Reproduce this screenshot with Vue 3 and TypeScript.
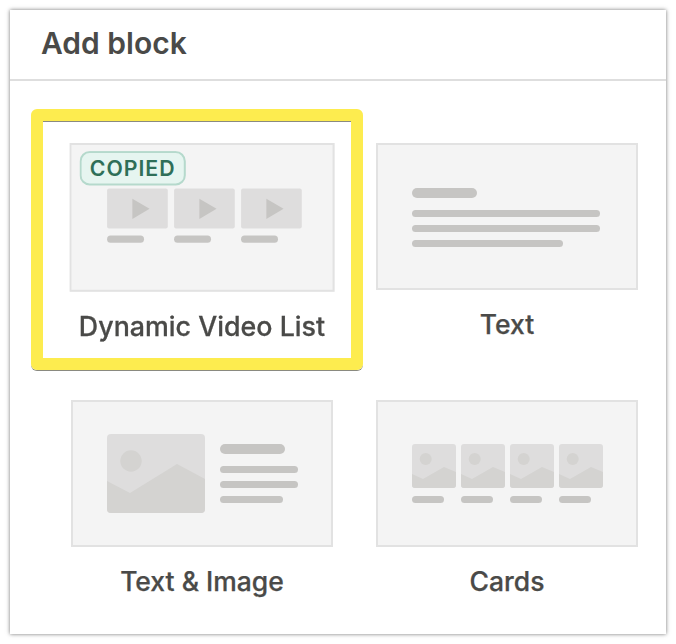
<script setup lang="ts">
type Kind = 'video' | 'text' | 'image' | 'cards'

const blocks: { kind: Kind; label: string; copied?: boolean }[] = [
  { kind: 'video', label: 'Dynamic Video List', copied: true },
  { kind: 'text', label: 'Text' },
  { kind: 'image', label: 'Text & Image' },
  { kind: 'cards', label: 'Cards' }
]

const videoOffsets = [37.2, 103.4, 169.6]
const cardOffsets = [36, 85, 134, 183]
</script>

<template>
  <div class="panel">
    <h1 class="title">Add block</h1>
    <div class="grid">
      <div v-for="block in blocks" :key="block.kind" class="cell">
        <div v-if="block.copied" class="ring"></div>
        <div class="tile" :class="{ selected: block.copied }">
          <div class="thumb">
            <span v-if="block.copied" class="badge">COPIED</span>
            <svg viewBox="2 2 258 143" width="258" height="143">
              <template v-if="block.kind === 'video'">
                <g v-for="x in videoOffsets" :key="x" :transform="`translate(${x} 45)`">
                  <rect width="60" height="39.5" rx="2" fill="#dedddd" />
                  <path d="M25 10 L42 20 L25 30 Z" fill="#c6c5c3" />
                  <rect y="46.5" width="36.5" height="7" rx="3.5" fill="#c6c5c3" />
                </g>
              </template>

              <template v-else-if="block.kind === 'text'">
                <rect x="36" y="45" width="65" height="10" rx="5" fill="#c6c5c3" />
                <rect x="36" y="67" width="188" height="7" rx="3.5" fill="#c6c5c3" />
                <rect x="36" y="82" width="188" height="7" rx="3.5" fill="#c6c5c3" />
                <rect x="36" y="97" width="151" height="7" rx="3.5" fill="#c6c5c3" />
              </template>

              <template v-else-if="block.kind === 'image'">
                <rect x="36" y="34" width="98" height="79" rx="4" fill="#dedddd" />
                <circle cx="60" cy="61" r="10.7" fill="#d4d3d1" />
                <path d="M36 81 L59 93 L106 64 L134 79 V109 a4 4 0 0 1 -4 4 H40 a4 4 0 0 1 -4 -4 Z" fill="#d4d3d1" />
                <rect x="149" y="44" width="65" height="10" rx="5" fill="#c6c5c3" />
                <rect x="149" y="66" width="78" height="7" rx="3.5" fill="#c6c5c3" />
                <rect x="149" y="81" width="78" height="7" rx="3.5" fill="#c6c5c3" />
                <rect x="149" y="96" width="63" height="7" rx="3.5" fill="#c6c5c3" />
              </template>

              <template v-else>
                <g v-for="x in cardOffsets" :key="x" :transform="`translate(${x} 44)`">
                  <rect width="44" height="44" rx="3" fill="#dedddd" />
                  <circle cx="13.7" cy="15" r="6" fill="#d4d3d1" />
                  <path d="M0 30 L11 35 L32 23 L44 28 V41 a3 3 0 0 1 -3 3 H3 a3 3 0 0 1 -3 -3 Z" fill="#d4d3d1" />
                  <rect y="52" width="32" height="7" rx="3.5" fill="#c6c5c3" />
                </g>
              </template>
            </svg>
          </div>
          <div class="label">{{ block.label }}</div>
        </div>
      </div>
    </div>
  </div>
</template>

<style>
html,
body {
  background: #fff;
}
</style>

<style scoped>
.panel {
  box-sizing: border-box;
  width: 656px;
  height: 624px;
  margin: 10px;
  background: #fff;
  box-shadow: 0 0 4px rgba(0, 0, 0, 0.55);
  font-family: Inter, "Liberation Sans", sans-serif;
  color: #4a4a48;
}

.title {
  box-sizing: border-box;
  height: 71px;
  margin: 0;
  padding: 15px 31px 0;
  border-bottom: 2px solid #dedede;
  font-size: 30px;
  line-height: 36px;
  font-weight: 600;
}

.grid {
  display: grid;
  grid-template-columns: 262px 262px;
  column-gap: 43px;
  row-gap: 61px;
  padding: 62px 0 0 61px;
}

.cell {
  position: relative;
}

.ring {
  position: absolute;
  top: -34px;
  left: -40px;
  right: -30px;
  height: 261px;
  box-sizing: border-box;
  border: 12px solid #fdec4f;
  border-radius: 6px;
  box-shadow: 0 1px 0 #8a8a80, inset 0 1px 0 #8a8a80;
}

.tile.selected {
  position: relative;
  transform: scale(1.012);
  transform-origin: top center;
}

.thumb {
  position: relative;
  box-sizing: border-box;
  width: 262px;
  height: 147px;
  border: 2px solid #e2e2e2;
  background: #f4f4f4;
}

.thumb svg {
  display: block;
}

.badge {
  position: absolute;
  top: 6px;
  left: 8px;
  box-sizing: border-box;
  width: 105px;
  height: 34px;
  border: 2px solid #b5d9cc;
  border-radius: 10px;
  background: #e6f5f0;
  color: #2f6f58;
  font-size: 21px;
  line-height: 32px;
  font-weight: 600;
  letter-spacing: 1px;
  text-align: center;
}

.label {
  margin-top: 18px;
  padding-top: 1px;
  font-size: 26.5px;
  line-height: 30px;
  font-weight: 500;
  -webkit-text-stroke: 0.25px #4a4a48;
  text-align: center;
}
</style>
